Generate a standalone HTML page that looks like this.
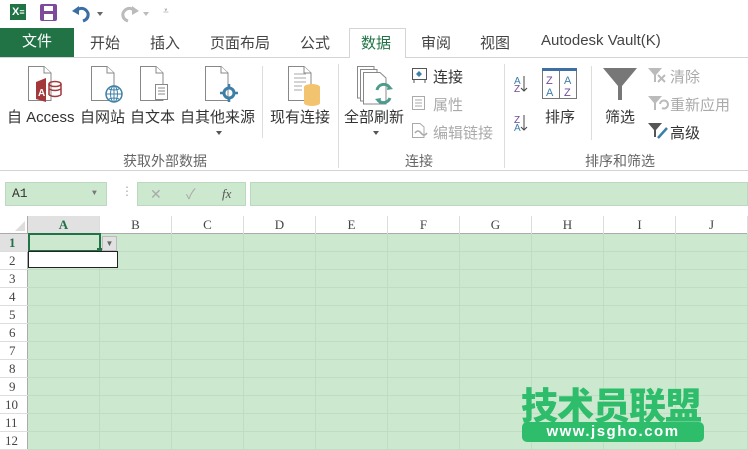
<!DOCTYPE html>
<html><head><meta charset="utf-8"><style>
*{margin:0;padding:0;box-sizing:border-box}
body{width:748px;height:450px;overflow:hidden;background:#fff;font-family:"Liberation Sans","Noto Sans CJK SC",sans-serif;position:relative;color:#444}
.a{position:absolute}
.t{font-size:14px;color:#444;white-space:nowrap}
.lbl{font-size:14px;color:#333;white-space:nowrap}
.grp{font-size:13px;color:#666;white-space:nowrap}
.dis{color:#aaa}
.vs{position:absolute;width:1px;background:#ddd}
.colh{position:absolute;top:216px;height:18px;font-family:"Liberation Serif",serif;font-size:13px;color:#444;text-align:center;line-height:18px;border-right:1px solid #ddd}
.rowh{position:absolute;left:0;width:28px;height:18px;font-family:"Liberation Serif",serif;font-size:13px;color:#444;text-align:left;padding-left:9px;line-height:18px;border-bottom:1px solid #ddd}
</style></head><body>
<div class="a" style="left:10px;top:4px;width:16px;height:16px;background:#217346;color:#fff;font-size:11px;font-weight:bold;line-height:16px;padding-left:2px">X<span style="font-size:9px">≡</span></div>
<div class="a" style="left:40px;top:4px;width:17px;height:17px;background:#7d4a9c;border-radius:2px"><div class="a" style="left:4px;top:2px;width:9px;height:5px;background:#fff"></div><div class="a" style="left:4px;top:10px;width:9px;height:6px;background:#fff"></div></div>
<svg class="a" style="left:70px;top:3px" width="40" height="20"><path d="M5 8 Q14 2 18 10 Q19 16 13 18" stroke="#3a6ea5" stroke-width="3" fill="none"/><path d="M2 8 L9 3 L9 12Z" fill="#3a6ea5"/><path d="M27 9 L33 9 L30 13Z" fill="#666"/></svg>
<svg class="a" style="left:117px;top:3px" width="40" height="20"><path d="M19 8 Q10 2 6 10 Q5 16 11 18" stroke="#bbb" stroke-width="3" fill="none"/><path d="M22 8 L15 3 L15 12Z" fill="#bbb"/><path d="M26 9 L32 9 L29 13Z" fill="#bbb"/></svg>
<div class="a" style="left:163px;top:6px;font-size:10px;color:#888">⩡</div>
<div class="a" style="left:0;top:28px;width:74px;height:30px;background:#217346;color:#fff;font-size:15px;line-height:28px;text-align:center">文件</div>
<div class="a" style="left:0;top:57px;width:748px;height:1px;background:#d4d4d4"></div>
<div class="a" style="left:349px;top:28px;width:57px;height:30px;background:#fff;border:1px solid #d4d4d4;border-bottom:none"></div>
<div class="a t" style="left:90px;top:32px;font-size:15px">开始</div>
<div class="a t" style="left:150px;top:32px;font-size:15px">插入</div>
<div class="a t" style="left:210px;top:32px;font-size:15px">页面布局</div>
<div class="a t" style="left:300px;top:32px;font-size:15px">公式</div>
<div class="a t" style="left:361px;top:32px;font-size:15px;color:#217346">数据</div>
<div class="a t" style="left:421px;top:32px;font-size:15px">审阅</div>
<div class="a t" style="left:480px;top:32px;font-size:15px">视图</div>
<div class="a t" style="left:541px;top:32px;font-size:15px">Autodesk Vault(K)</div>
<svg class="a" style="left:0;top:60px" width="748" height="110">
<g fill="#fff" stroke="#888" stroke-width="1">
<path d="M28.5 6.5 H44 L51 13 V40.5 H28.5Z"/><path d="M44 6.5 V13 H51"/>
<path d="M91.5 6.5 H107 L114 13 V40.5 H91.5Z"/><path d="M107 6.5 V13 H114"/>
<path d="M140.5 6.5 H156 L163 13 V40.5 H140.5Z"/><path d="M156 6.5 V13 H163"/>
<path d="M205.5 6.5 H221 L228 13 V40.5 H205.5Z"/><path d="M221 6.5 V13 H228"/>
<path d="M288.5 6.5 H304 L311 13 V40.5 H288.5Z"/><path d="M304 6.5 V13 H311"/>
<path d="M357.5 6.5 H374 V38 H357.5Z"/><path d="M360.5 9.5 H377 V41 H360.5Z"/><path d="M363.5 12.5 H380 L386 18 V44 H363.5Z"/>
</g>
<path d="M36 22 L46 18 V42 L36 39Z" fill="#a4373a"/><text x="38" y="36" font-size="10" fill="#fff" font-weight="bold" font-family="Liberation Sans">A</text>
<ellipse cx="55" cy="24" rx="6" ry="2.5" fill="none" stroke="#a4373a" stroke-width="1.5"/><path d="M49 24 V35 M61 24 V35 M49 29 Q55 32 61 29 M49 35 Q55 38 61 35" stroke="#a4373a" stroke-width="1.5" fill="none"/>
<circle cx="114" cy="34" r="8" fill="#fff" stroke="#3d7fa6" stroke-width="1.5"/><path d="M106 34 H122 M114 26 V42 M109 29 Q114 31 119 29 M109 39 Q114 37 119 39" stroke="#3d7fa6" fill="none"/><ellipse cx="114" cy="34" rx="3.5" ry="8" fill="none" stroke="#3d7fa6"/>
<rect x="155.5" y="24.5" width="12" height="15" fill="#fff" stroke="#888"/><path d="M158 28 H165 M158 31 H165 M158 34 H165" stroke="#888"/>
<circle cx="229" cy="33" r="5" fill="none" stroke="#3d7fa6" stroke-width="3"/><path d="M229 24 V28 M229 38 V42 M220 33 H224 M234 33 H238" stroke="#3d7fa6" stroke-width="2.5"/>
<path d="M294 14 H306 M294 18 H306 M294 22 H306 M294 26 H302 M294 30 H302" stroke="#aaa"/>
<ellipse cx="312" cy="27" rx="8" ry="3" fill="#f2c46f"/><rect x="304" y="27" width="16" height="16" fill="#f2c46f"/><ellipse cx="312" cy="43" rx="8" ry="3" fill="#f2c46f"/>
<path d="M377 30 A7 7 0 0 1 390 28 M390 38 A7 7 0 0 1 378 40" stroke="#4d9a8e" stroke-width="3" fill="none"/><path d="M388 24 L393 29 L387 30Z M380 44 L375 39 L381 38Z" fill="#4d9a8e"/>
<path d="M216 71 L222 71 L219 75Z M373 71 L379 71 L376 75Z" fill="#555"/>
<rect x="412.5" y="8.5" width="14" height="11" fill="#fff" stroke="#555"/><path d="M419 11 L422 14 L419 17 L416 14Z" fill="#3d7fa6"/><path d="M414 20 V23 M425 20 V23" stroke="#555"/>
<rect x="412.5" y="36.5" width="12" height="13" fill="#fff" stroke="#aaa"/><path d="M415 40 H422 M415 43 H422 M415 46 H422" stroke="#aaa"/>
<path d="M412.5 63.5 H420 L424 67 V77.5 H412.5Z" fill="#fff" stroke="#aaa"/><path d="M415 73 Q418 69 421 73 Q424 77 427 73" stroke="#aaa" fill="none" stroke-width="1.5"/>
<text x="514" y="24" font-size="10" fill="#3d7fa6" font-family="Liberation Sans">A</text><text x="514" y="32" font-size="10" fill="#6e4a9a" font-family="Liberation Sans">Z</text><path d="M524 16 V31 M521 28 L524 31 L527 28" stroke="#444" fill="none"/>
<text x="514" y="63" font-size="10" fill="#6e4a9a" font-family="Liberation Sans">Z</text><text x="514" y="71" font-size="10" fill="#3d7fa6" font-family="Liberation Sans">A</text><path d="M524 55 V70 M521 67 L524 70 L527 67" stroke="#444" fill="none"/>
<rect x="542.5" y="9.5" width="34" height="29" fill="#fff" stroke="#777"/><rect x="542" y="8" width="35" height="3" fill="#3d6ea5"/><path d="M559.5 11 V38" stroke="#777"/>
<text x="546" y="24" font-size="11" fill="#6e4a9a" font-family="Liberation Sans">Z</text><text x="546" y="36" font-size="11" fill="#3d7fa6" font-family="Liberation Sans">A</text><text x="564" y="24" font-size="11" fill="#3d7fa6" font-family="Liberation Sans">A</text><text x="564" y="36" font-size="11" fill="#6e4a9a" font-family="Liberation Sans">Z</text>
<path d="M603 8 H637 L622 26 V40 H618 V26Z" fill="#777"/>
<path d="M648 8 H662 L656 15 V22 H654 V15Z" fill="#bbb"/><path d="M658 15 L665 22 M665 15 L658 22" stroke="#bbb" stroke-width="2"/>
<path d="M648 36 H662 L656 43 V50 H654 V43Z" fill="#bbb"/><path d="M660 44 A4 4 0 1 1 662 48" stroke="#bbb" stroke-width="2" fill="none"/>
<path d="M648 63 H662 L656 70 V77 H654 V70Z" fill="#555"/><path d="M658 78 L667 68" stroke="#3d7fa6" stroke-width="2.5"/>
</svg>
<div class="a lbl" style="left:7px;top:106px;font-size:15px">自 Access</div>
<div class="a lbl" style="left:80px;top:106px;font-size:15px">自网站</div>
<div class="a lbl" style="left:130px;top:106px;font-size:15px">自文本</div>
<div class="a lbl" style="left:180px;top:106px;font-size:15px">自其他来源</div>
<div class="a lbl" style="left:270px;top:106px;font-size:15px">现有连接</div>
<div class="a lbl" style="left:344px;top:106px;font-size:15px">全部刷新</div>
<div class="a lbl" style="left:433px;top:66px;font-size:15px">连接</div>
<div class="a lbl dis" style="left:433px;top:94px;font-size:15px">属性</div>
<div class="a lbl dis" style="left:433px;top:122px;font-size:15px">编辑链接</div>
<div class="a lbl" style="left:545px;top:106px;font-size:15px">排序</div>
<div class="a lbl" style="left:605px;top:106px;font-size:15px">筛选</div>
<div class="a lbl dis" style="left:670px;top:66px;font-size:15px">清除</div>
<div class="a lbl dis" style="left:670px;top:94px;font-size:15px">重新应用</div>
<div class="a lbl" style="left:670px;top:122px;font-size:15px">高级</div>
<div class="a grp" style="left:123px;top:151px;font-size:14px">获取外部数据</div>
<div class="a grp" style="left:405px;top:151px;font-size:14px">连接</div>
<div class="a grp" style="left:585px;top:151px;font-size:14px">排序和筛选</div>
<div class="vs" style="left:262px;top:66px;height:72px"></div>
<div class="vs" style="left:338px;top:64px;height:104px"></div>
<div class="vs" style="left:504px;top:64px;height:104px"></div>
<div class="vs" style="left:591px;top:66px;height:74px"></div>
<div class="a" style="left:0;top:170px;width:748px;height:1px;background:#d4d4d4"></div>
<div class="a" style="left:0;top:171px;width:748px;height:45px;background:#fff"></div>
<div class="a" style="left:5px;top:182px;width:102px;height:24px;background:#cce8cf;border:1px solid #bcd8bf;font-family:'Liberation Mono',monospace;font-size:13px;line-height:22px;padding-left:6px;color:#333">A1<span style="position:absolute;left:86px;top:0;font-size:8px;color:#777">▼</span></div>
<div class="a" style="left:121px;top:184px;color:#aaa;font-size:12px">⋮</div>
<div class="a" style="left:137px;top:182px;width:109px;height:24px;background:#cce8cf;border:1px solid #bcd8bf;color:#aaa;font-size:14px;line-height:22px"><span class="a" style="left:12px">✕</span><span class="a" style="left:48px">✓</span><span class="a" style="left:84px;font-family:'Liberation Serif',serif;font-style:italic;color:#555;font-size:13px">fx</span></div>
<div class="a" style="left:250px;top:182px;width:498px;height:24px;background:#cce8cf;border:1px solid #bcd8bf"></div>
<div class="a" style="left:28px;top:234px;width:720px;height:216px;background-color:#cce8cf;background-image:linear-gradient(to right,#c0dcc3 1px,transparent 1px),linear-gradient(to bottom,#c0dcc3 1px,transparent 1px);background-size:72px 18px;background-position:71px 17px"></div>
<div class="a" style="left:28px;top:216px;width:72px;height:18px;background:#e1e1e1"></div>
<div class="a" style="left:0;top:233px;width:748px;height:1px;background:#ababab"></div>
<div class="a" style="left:27px;top:216px;width:1px;height:234px;background:#ababab"></div>
<div class="a" style="left:0;top:234px;width:28px;height:18px;background:#e1e1e1"></div>
<svg class="a" style="left:14px;top:220px" width="12" height="12"><path d="M11 1 V11 H1Z" fill="#ddd"/></svg>
<div class="colh" style="left:28px;width:72px;font-weight:bold;color:#217346">A</div>
<div class="colh" style="left:100px;width:72px">B</div>
<div class="colh" style="left:172px;width:72px">C</div>
<div class="colh" style="left:244px;width:72px">D</div>
<div class="colh" style="left:316px;width:72px">E</div>
<div class="colh" style="left:388px;width:72px">F</div>
<div class="colh" style="left:460px;width:72px">G</div>
<div class="colh" style="left:532px;width:72px">H</div>
<div class="colh" style="left:604px;width:72px">I</div>
<div class="colh" style="left:676px;width:72px">J</div>
<div class="rowh" style="top:234px;font-weight:bold;color:#217346">1</div>
<div class="rowh" style="top:252px">2</div>
<div class="rowh" style="top:270px">3</div>
<div class="rowh" style="top:288px">4</div>
<div class="rowh" style="top:306px">5</div>
<div class="rowh" style="top:324px">6</div>
<div class="rowh" style="top:342px">7</div>
<div class="rowh" style="top:360px">8</div>
<div class="rowh" style="top:378px">9</div>
<div class="rowh" style="top:396px;padding-left:5px">10</div>
<div class="rowh" style="top:414px;padding-left:5px">11</div>
<div class="rowh" style="top:432px;padding-left:5px">12</div>
<div class="a" style="left:28px;top:233px;width:73px;height:19px;border:2px solid #217346"></div>
<div class="a" style="left:97px;top:248px;width:5px;height:5px;background:#217346"></div>
<div class="a" style="left:102px;top:236px;width:15px;height:15px;background:#e1e1e1;border:1px solid #bbb;font-size:8px;color:#666;text-align:center;line-height:13px">▼</div>
<div class="a" style="left:28px;top:251px;width:90px;height:17px;background:#fff;border:1px solid #222"></div>
<div class="a" style="left:521px;top:381px;font-size:37px;font-weight:900;color:#2ebd6b;letter-spacing:-1px;font-family:'Noto Sans CJK SC',sans-serif;line-height:44px">技术员联盟</div>
<div class="a" style="left:522px;top:422px;width:182px;height:20px;background:#2ebd6b;border-radius:5px;color:#fff;font-size:15px;font-weight:bold;text-align:center;line-height:20px;letter-spacing:1.5px">www.jsgho.com</div>
</body></html>
